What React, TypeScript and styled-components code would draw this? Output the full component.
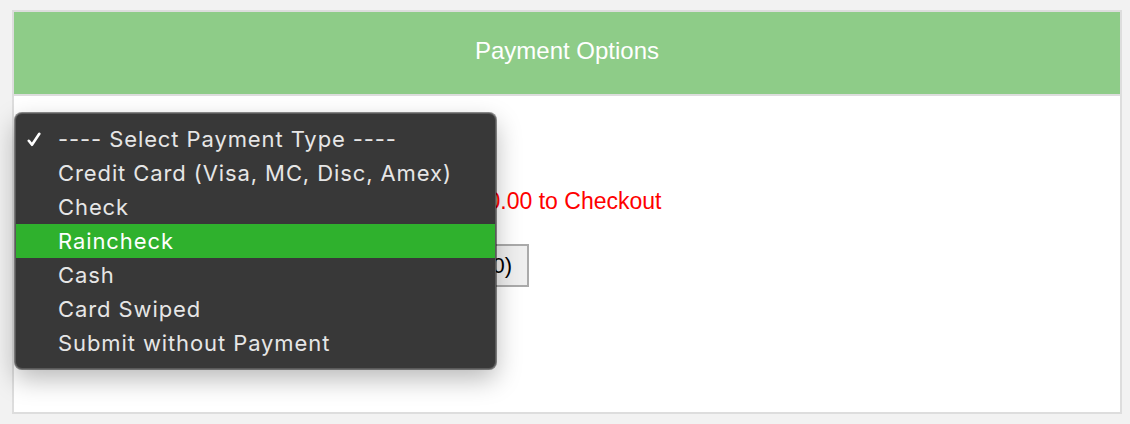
import styled, { createGlobalStyle } from 'styled-components';

const GlobalStyle = createGlobalStyle`
  html, body {
    margin: 0;
    padding: 0;
    background: #f2f2f2;
  }
  body {
    padding: 10px 8px 10px 12px;
    font-family: "Liberation Sans", Arial, sans-serif;
  }
`;

const Panel = styled.section`
  position: relative;
  width: 1106px;
  height: 400px;
  border: 2px solid #dddddd;
  background: #ffffff;
  display: flex;
  flex-direction: column;
`;

const Header = styled.header`
  height: 84px;
  background: #8ecc88;
  border-bottom: 2px solid #dddddd;
  display: flex;
  align-items: center;
  justify-content: center;
  color: #ffffff;
  font-size: 24px;
  padding-bottom: 4px;
  box-sizing: border-box;
`;

const Body = styled.div`
  display: flex;
  flex-direction: column;
  align-items: flex-start;
  padding: 24px 14px 22px 119px;
`;

const TypeSelect = styled.select`
  font-family: "Liberation Sans", Arial, sans-serif;
  font-size: 16px;
  height: 30px;
  margin-bottom: 38px;
`;

const Notice = styled.p`
  margin: 0 0 30px 0;
  color: #ff0000;
  font-size: 23px;
  line-height: 26px;
  white-space: nowrap;
`;

const SubmitButton = styled.button`
  font-family: "Liberation Sans", Arial, sans-serif;
  font-size: 22px;
  height: 43px;
  padding: 0 15px;
  background: #efefef;
  border: 2px solid #aaaaaa;
  color: #000;
  white-space: nowrap;
`;

const Menu = styled.ul`
  position: absolute;
  left: 1px;
  top: 101px;
  width: 479px;
  margin: 0;
  padding: 8px 0;
  list-style: none;
  background: #383838;
  border: 1px solid #5a5a5a;
  border-radius: 7px;
  box-shadow: 0 0 0 1px rgba(0, 0, 0, 0.45), 0 10px 26px rgba(0, 0, 0, 0.28);
  font-family: Inter, "Noto Sans", sans-serif;
`;

const Item = styled.li<{ $active?: boolean }>`
  position: relative;
  height: 34px;
  display: flex;
  align-items: center;
  padding-left: 42px;
  font-size: 22px;
  letter-spacing: 0.9px;
  color: ${p => (p.$active ? '#ffffff' : '#e6e6e6')};
  background: ${p => (p.$active ? '#2fb12d' : 'transparent')};
`;

const Check = styled.svg`
  position: absolute;
  left: 11px;
  top: 10px;
`;

const options = [
  '---- Select Payment Type ----',
  'Credit Card (Visa, MC, Disc, Amex)',
  'Check',
  'Raincheck',
  'Cash',
  'Card Swiped',
  'Submit without Payment',
];

export default function App() {
  return (
    <>
      <GlobalStyle />
      <Panel>
        <Header>Payment Options</Header>
        <Body>
          <TypeSelect>
            <option>---- Select Payment Type ----</option>
          </TypeSelect>
          <Notice>Your cart total must be at least $100.00 to Checkout</Notice>
          <SubmitButton>Continue to Checkout Now ($100.00)</SubmitButton>
        </Body>
        <Menu>
          {options.map((o, i) => (
            <Item key={o} $active={o === 'Raincheck'}>
              {i === 0 && (
                <Check width="14" height="15" viewBox="0 0 14 15">
                  <path d="M1.8 8.8 L5 12.8 L12.3 1.8" fill="none" stroke="#fff" strokeWidth="2.6" strokeLinecap="round" strokeLinejoin="round" />
                </Check>
              )}
              {o}
            </Item>
          ))}
        </Menu>
      </Panel>
    </>
  );
}
